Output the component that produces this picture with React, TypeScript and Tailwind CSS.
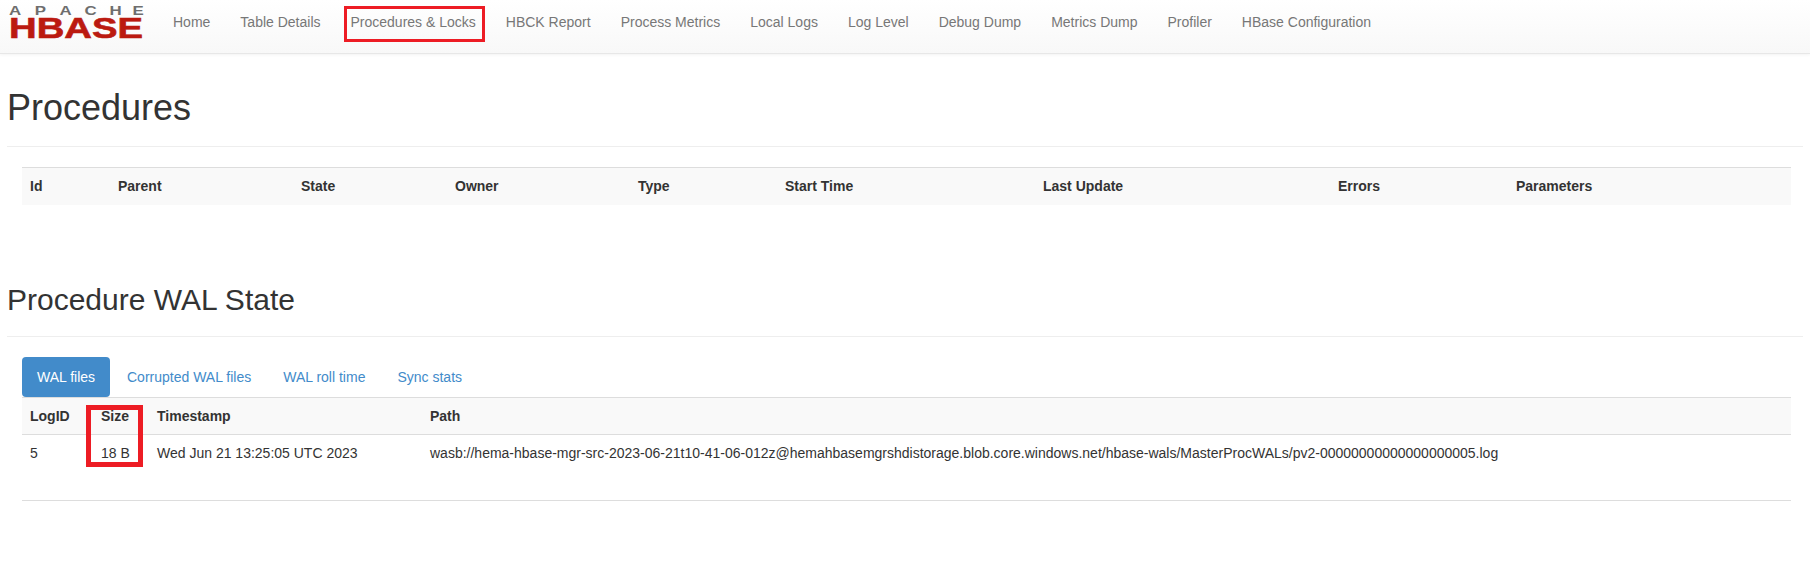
const navItems = ['Home', 'Table Details', 'Procedures & Locks', 'HBCK Report', 'Process Metrics', 'Local Logs', 'Log Level', 'Debug Dump', 'Metrics Dump', 'Profiler', 'HBase Configuration'];

const procColumns = [
  { label: 'Id', width: 'w-[88px]' },
  { label: 'Parent', width: 'w-[183px]' },
  { label: 'State', width: 'w-[154px]' },
  { label: 'Owner', width: 'w-[183px]' },
  { label: 'Type', width: 'w-[147px]' },
  { label: 'Start Time', width: 'w-[258px]' },
  { label: 'Last Update', width: 'w-[295px]' },
  { label: 'Errors', width: 'w-[178px]' },
  { label: 'Parameters', width: 'w-[283px]' },
];

const tabs = ['Corrupted WAL files', 'WAL roll time', 'Sync stats'];

function Logo() {
  return (
    <svg width="136" height="36" viewBox="0 0 136 36" className="shrink-0 overflow-visible">
      <g transform="scale(1.35 1)">
        <text x="0 19 37.5 56 74.5 91.5" y="9.5" fontFamily="'Liberation Sans', sans-serif" fontSize="12.5" fontWeight="700" fill="#6e6e6e">
          APACHE
        </text>
      </g>
      <text x="0" y="33" textLength="134" lengthAdjust="spacingAndGlyphs" fontFamily="'Liberation Sans', sans-serif" fontSize="29" fontWeight="700" fill="#bb1a10" stroke="#bb1a10" strokeWidth="0.6">
        HBASE
      </text>
    </svg>
  );
}

export default function App() {
  return (
    <div className="relative min-h-[564px] bg-white font-['Liberation_Sans',Arial,sans-serif] text-sm leading-5 text-[#333]">
      <nav className="flex h-[54px] border-b border-[#e7e7e7] bg-gradient-to-b from-white to-[#f8f8f8] shadow-[0_1px_3px_rgba(0,0,0,0.05)]">
        <div className="pl-[9px] pt-[5px]">
          <Logo />
        </div>
        <ul className="ml-[13px] flex">
          {navItems.map((item) => (
            <li key={item} className="px-[15px] pt-3 text-[#777]">
              {item}
            </li>
          ))}
        </ul>
      </nav>

      <div className="px-[7px]">
        <div className="border-b border-[#eee] pt-[34px] pb-[18px]">
          <h1 className="text-4xl leading-[40px] font-normal">Procedures</h1>
        </div>
      </div>

      <div className="px-[22px] pt-5">
        <table className="w-[1769px] table-fixed border-collapse">
          <thead>
            <tr className="h-[37px] border-t border-[#ddd] bg-[#f9f9f9]">
              {procColumns.map((c) => (
                <th key={c.label} className={`${c.width} px-2 text-left font-bold`}>
                  {c.label}
                </th>
              ))}
            </tr>
          </thead>
        </table>
      </div>

      <div className="px-[7px]">
        <div className="border-b border-[#eee] pt-[78px] pb-5">
          <h2 className="text-[30px] leading-[33px] font-normal">Procedure WAL State</h2>
        </div>
      </div>

      <div className="px-[22px] pt-5">
        <div className="flex h-10 w-[1769px] items-stretch gap-0.5">
          <div className="flex w-[88px] items-center justify-center rounded bg-[#428bca] text-white">WAL files</div>
          {tabs.map((t) => (
            <div key={t} className="flex items-center px-[15px] text-[#428bca]">
              {t}
            </div>
          ))}
        </div>
        <table className="w-[1769px] table-fixed border-collapse border-b border-[#ddd]">
          <thead>
            <tr className="h-[37px] border-y border-[#ddd] bg-[#f9f9f9]">
              <th className="w-[71px] px-2 text-left font-bold">LogID</th>
              <th className="w-[56px] px-2 text-left font-bold">Size</th>
              <th className="w-[273px] px-2 text-left font-bold">Timestamp</th>
              <th className="px-2 text-left font-bold">Path</th>
            </tr>
          </thead>
          <tbody>
            <tr className="h-[37px]">
              <td className="px-2">5</td>
              <td className="px-2">18 B</td>
              <td className="px-2">Wed Jun 21 13:25:05 UTC 2023</td>
              <td className="px-2">wasb://hema-hbase-mgr-src-2023-06-21t10-41-06-012z@hemahbasemgrshdistorage.blob.core.windows.net/hbase-wals/MasterProcWALs/pv2-00000000000000000005.log</td>
            </tr>
            <tr className="h-[29px]">
              <td colSpan={4} />
            </tr>
          </tbody>
        </table>
      </div>

      {/* red callouts drawn over the page */}
      <div className="absolute left-[344px] top-[6px] h-[36px] w-[141px] border-[3px] border-[#ed1c24]" />
      <div className="absolute left-[86px] top-[405px] h-[62px] w-[57px] border-[5px] border-[#ed1c24]" />
    </div>
  );
}
